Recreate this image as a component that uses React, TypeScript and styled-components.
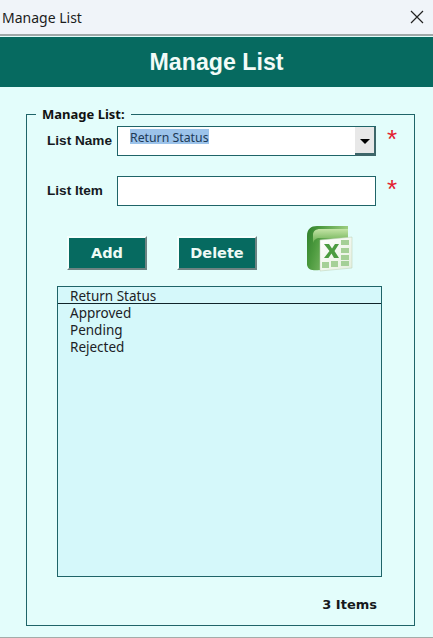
import React, { FC } from 'react';

import styled, { createGlobalStyle } from 'styled-components';

const GlobalStyle = createGlobalStyle`
    html, body {
        margin: 0;
        padding: 0;
        background: #e3fdfb;
    }
`;

const Window = styled.div`
    width: 433px;
    height: 638px;
    display: flex;
    flex-direction: column;
    overflow: hidden;
    background: #e3fdfb;
    border-bottom: 1px solid #a3aca9;
    box-sizing: border-box;
`;

const TitleBar = styled.div`
    height: 34px;
    flex: none;
    display: flex;
    align-items: center;
    justify-content: space-between;
    padding: 0 8px 0 2px;
    background: #f0f4f9;
    border-bottom: 2px solid #9fa8a8;
    font: 14px 'Noto Sans', sans-serif;
    color: #1c1c1c;
`;

const Banner = styled.div`
    height: 50px;
    flex: none;
    margin-top: 1px;
    display: flex;
    align-items: center;
    justify-content: center;
    background: #066a60;
    color: #f2fbf8;
    font: bold 23.2px 'Liberation Sans', sans-serif;
`;

const Content = styled.div`
    flex: 1;
    padding: 20px 18px 11px 26px;
    display: flex;
    min-height: 0;
`;

const Group = styled.fieldset`
    flex: 1;
    margin: 0;
    padding: 4px 33px 0 20px;
    border: 1px solid #1f6468;
    display: flex;
    flex-direction: column;
    min-width: 0;
`;

const GroupTitle = styled.legend`
    margin-left: -11px;
    padding: 0 6px;
    font: bold 13px 'Noto Sans', sans-serif;
    color: #111;
    line-height: 15px;
`;

const Row = styled.div`
    display: flex;
    align-items: center;
    height: 30px;
    margin-bottom: 20px;
`;

const Label = styled.label`
    width: 70px;
    flex: none;
    margin-bottom: 2px;
    font: bold 13.6px 'Liberation Sans', sans-serif;
    color: #151a22;
`;

const Field = styled.div`
    width: 259px;
    height: 30px;
    flex: none;
    box-sizing: border-box;
    border: 1px solid #1f6468;
    background: #fff;
    display: flex;
    justify-content: space-between;
`;

const Selected = styled.span`
    align-self: flex-start;
    margin: 2px 0 0 12px;
    height: 15px;
    line-height: 14px;
    background: #9cc3ea;
    color: #1c3a57;
    font: 12.3px 'Noto Sans', sans-serif;
`;

const DropButton = styled.div`
    width: 21px;
    box-sizing: border-box;
    background: #e8e8e8;
    border-right: 2px solid #3e6669;
    border-bottom: 3px solid #3e6669;
    display: flex;
    align-items: center;
    justify-content: center;
    margin: 0 -1px -1px 0;
`;

const Arrow = styled.div`
    width: 0;
    height: 0;
    margin-top: 3px;
    border-left: 5px solid transparent;
    border-right: 5px solid transparent;
    border-top: 5px solid #000;
`;

const Required = styled.span`
    margin: 0 0 4px 11px;
    color: #e3202f;
    font: 26px 'Liberation Sans', sans-serif;
    line-height: 24px;
    height: 24px;
`;

const ActionRow = styled.div`
    display: flex;
    align-items: flex-start;
    height: 61px;
    margin-top: -1px;
    padding-left: 20px;
`;

const ActionButton = styled.button`
    width: 80px;
    height: 34px;
    margin: 11px 30px 0 0;
    padding: 0;
    box-sizing: border-box;
    background: #066a60;
    color: #eefaf6;
    border: 2px solid;
    border-color: #f4fffd #6d8382 #6d8382 #f4fffd;
    font: bold 14.5px 'DejaVu Sans', sans-serif;
`;

const ExcelIcon = styled.svg`
    width: 50px;
    height: 50px;
    margin: -1px 0 0 17px;
`;

const ListBox = styled.div`
    width: 325px;
    height: 291px;
    margin-left: 10px;
    box-sizing: border-box;
    border: 1px solid #1f6468;
    background: #d5f8fa;
    font: 13.5px 'Noto Sans', sans-serif;
    color: #1c2226;
`;

const ListHead = styled.div`
    height: 16px;
    line-height: 19px;
    padding-left: 12px;
    border-bottom: 1px solid #10242a;
`;

const ListRow = styled.div`
    height: 17px;
    line-height: 19px;
    padding-left: 12px;
`;

const Footer = styled.div`
    margin-top: 20px;
    margin-left: 10px;
    width: 320px;
    text-align: right;
    font: bold 13px 'DejaVu Sans', sans-serif;
    color: #16191c;
`;

const items = ['Approved', 'Pending', 'Rejected'];

const Excel: FC = () => (
    <ExcelIcon viewBox="0 0 50 50">
        <defs>
            <linearGradient id="book" x1="0" y1="0" x2="1" y2="0.3">
                <stop offset="0" stopColor="#2f7f2c" />
                <stop offset="0.3" stopColor="#4c9a3e" />
                <stop offset="1" stopColor="#a7d488" />
            </linearGradient>
            <linearGradient id="leaf" x1="0" y1="0" x2="0" y2="1">
                <stop offset="0" stopColor="#c4e4a6" />
                <stop offset="1" stopColor="#66ad4e" />
            </linearGradient>
            <linearGradient id="sheet" x1="0" y1="0" x2="1" y2="1">
                <stop offset="0" stopColor="#ffffff" />
                <stop offset="1" stopColor="#e4efdd" />
            </linearGradient>
        </defs>
        <path d="M3 12C3 5 7 2 13 2H44V16H16V46C9 47 4 46 3 41z" fill="url(#book)" />
        <path d="M9 11C9 7 12 5 16 5H44V14H16C12 14 10 16 9 19z" fill="url(#leaf)" />
        <path d="M16 16L48 13V44L16 47z" fill="url(#sheet)" stroke="#b9cfb0" strokeWidth="0.5" />
        <g fill="#a5d097">
            <rect x="37" y="16" width="8" height="5" />
            <rect x="37" y="24" width="8" height="5" />
            <rect x="37" y="31" width="8" height="5" />
            <rect x="18" y="38" width="7" height="6" />
            <rect x="27" y="37" width="7" height="6" />
            <rect x="37" y="37" width="8" height="5" />
        </g>
        <path d="M20 20H25L28 24.5L31 20H35L30.5 27L35 34H30L27.5 29.5L24.5 34H20L25.5 27z" fill="#4c9c40" />
    </ExcelIcon>
);

const App: FC = () => {
    return (
        <Window>
            <GlobalStyle />
            <TitleBar>
                Manage List
                <svg width="16" height="16" viewBox="0 0 16 16" fill="none" stroke="#222" strokeWidth="1.2">
                    <path d="M2 2l12 12M14 2L2 14" />
                </svg>
            </TitleBar>
            <Banner>Manage List</Banner>
            <Content>
                <Group>
                    <GroupTitle>Manage List:</GroupTitle>
                    <Row>
                        <Label>List Name</Label>
                        <Field>
                            <Selected>Return Status</Selected>
                            <DropButton>
                                <Arrow />
                            </DropButton>
                        </Field>
                        <Required>*</Required>
                    </Row>
                    <Row>
                        <Label>List Item</Label>
                        <Field />
                        <Required>*</Required>
                    </Row>
                    <ActionRow>
                        <ActionButton>Add</ActionButton>
                        <ActionButton>Delete</ActionButton>
                        <Excel />
                    </ActionRow>
                    <ListBox>
                        <ListHead>Return Status</ListHead>
                        {items.map((item) => (
                            <ListRow key={item}>{item}</ListRow>
                        ))}
                    </ListBox>
                    <Footer>3 Items</Footer>
                </Group>
            </Content>
        </Window>
    );
};

export default App;
